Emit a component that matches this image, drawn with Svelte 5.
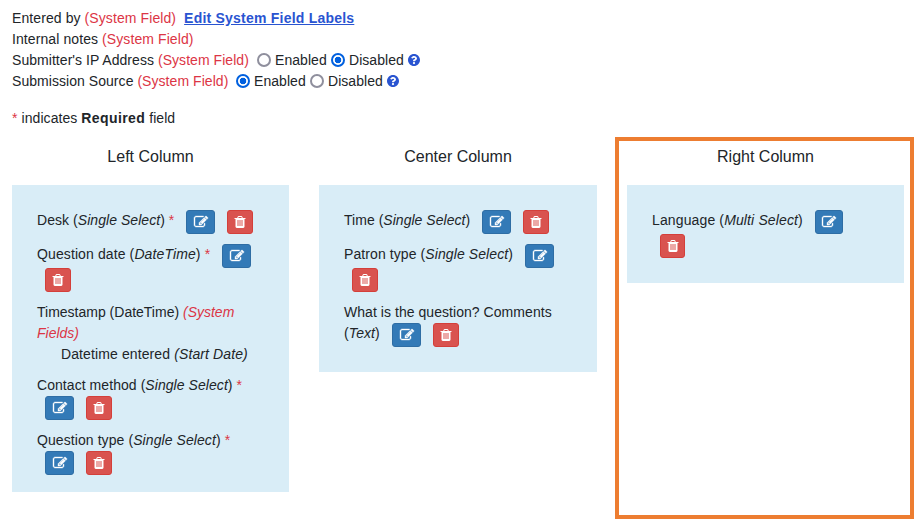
<script>
  const columns = [
    {
      title: 'Left Column',
      fields: [
        [{ name: 'Desk', type: 'Single Select', required: true, width: 141, track: 0.05, edit: true, remove: true }],
        [{ name: 'Question date', type: 'DateTime', required: true, width: 177, track: 0.11, edit: true }, { remove: true }],
        [{ system: 'Timestamp (DateTime)', note: '(System' }, { note: 'Fields)' }, { sub: 'Datetime entered', subtype: '(Start Date)', track: 0.11 }],
        [{ name: 'Contact method', type: 'Single Select', required: true, track: 0.06 }, { edit: true, remove: true }],
        [{ name: 'Question type', type: 'Single Select', required: true, track: 0.08 }, { edit: true, remove: true }]
      ]
    },
    {
      title: 'Center Column',
      fields: [
        [{ name: 'Time', type: 'Single Select', width: 130, track: 0.03, edit: true, remove: true }],
        [{ name: 'Patron type', type: 'Single Select', width: 173, track: 0.09, edit: true }, { remove: true }],
        [{ name: 'What is the question? Comments', track: 0.05 }, { type: 'Text', width: 40, track: 0.1, edit: true, remove: true }]
      ]
    },
    {
      title: 'Right Column',
      highlight: true,
      fields: [[{ name: 'Language', type: 'Multi Select', width: 155, track: 0.13, edit: true }, { remove: true }]]
    }
  ];
  const settings = [
    { label: "Submitter's IP Address", width: 245, value: 'Disabled' },
    { label: 'Submission Source', width: 224, value: 'Enabled' }
  ];
</script>

<main>
  <section class="system">
    <div class="row">Entered by&nbsp;<span class="red">(System Field)</span><a href="#labels">Edit System Field Labels</a></div>
    <div class="row">Internal notes&nbsp;<span class="red">(System Field)</span></div>
    {#each settings as s}
      <div class="row setting">
        <span style="width:{s.width}px">{s.label} <span class="red">(System Field)</span></span>
        {#each ['Enabled', 'Disabled'] as option}
          <span class="radio" class:checked={s.value === option}></span>
          <span class={option.toLowerCase()}>{option}</span>
        {/each}
        <svg class="help" viewBox="8 8 496 496"><path d="M504 256c0 136.997-111.043 248-248 248S8 392.997 8 256C8 119.083 119.043 8 256 8s248 111.083 248 248zM262.655 90c-54.497 0-89.255 22.957-116.549 63.758-3.536 5.286-2.353 12.415 2.715 16.258l34.699 26.31c5.205 3.947 12.621 3.008 16.665-2.122 17.864-22.658 30.113-35.797 57.303-35.797 20.429 0 45.698 13.148 45.698 32.958 0 14.976-12.363 22.667-32.534 33.976C247.128 238.528 216 254.941 216 296v4c0 6.627 5.373 12 12 12h56c6.627 0 12-5.373 12-12v-1.333c0-28.462 83.186-29.647 83.186-106.667 0-58.002-60.165-102-116.531-102zM256 338c-25.365 0-46 20.635-46 46 0 25.364 20.635 46 46 46s46-20.636 46-46c0-25.364-20.635-46-46-46z" /></svg>
      </div>
    {/each}
    <p><span class="red">*</span> indicates <b>Required</b> field</p>
  </section>

  <div class="columns">
    {#each columns as col}
      <section class="column" class:highlight={col.highlight}>
        <h2>{col.title}</h2>
        <div class="panel">
          {#each col.fields as lines}
            <div class="field">
              {#each lines as l}
                <div class="line" style="letter-spacing:{l.track ?? 0}px">
                  {#if l.name || l.type}
                    <span style={l.width ? `width:${l.width}px` : ''}>{l.name ?? ''}{#if l.type}{l.name ? ' ' : ''}(<i>{l.type}</i>){/if}{#if l.required}{' '}<span class="red">*</span>{/if}</span>
                  {/if}
                  {#if l.system}{l.system}&nbsp;{/if}
                  {#if l.note}<i class="red">{l.note}</i>{/if}
                  {#if l.sub}<span class="sub">{l.sub} <i>{l.subtype}</i></span>{/if}
                  {#if l.edit}
                    <button class="edit" aria-label="Edit"><svg viewBox="0 0 1792 1792"><path d="M888 1184l116-116-152-152-116 116v56h96v96h56zm440-720q-16-16-33 1l-350 350q-17 17-1 33t33-1l350-350q17-17 1-33zm80 594v190q0 119-84.5 203.5t-203.5 84.5h-832q-119 0-203.5-84.5t-84.5-203.5v-832q0-119 84.5-203.5t203.5-84.5h832q63 0 117 25 15 7 18 23 3 17-9 29l-49 49q-14 14-32 8-23-6-45-6h-832q-66 0-113 47t-47 113v832q0 66 47 113t113 47h832q66 0 113-47t47-113v-126q0-13 9-22l64-64q15-15 35-7t20 29zm-96-738l288 288-672 672h-288v-288zm444 132l-92 92-288-288 92-92q28-28 68-28t68 28l152 152q28 28 28 68t-28 68z" /></svg></button>
                  {/if}
                  {#if l.remove}
                    <button class="remove" aria-label="Delete"><svg viewBox="0 0 1792 1792"><path d="M704 1376v-704q0-14-9-23t-23-9h-64q-14 0-23 9t-9 23v704q0 14 9 23t23 9h64q14 0 23-9t9-23zm256 0v-704q0-14-9-23t-23-9h-64q-14 0-23 9t-9 23v704q0 14 9 23t23 9h64q14 0 23-9t9-23zm256 0v-704q0-14-9-23t-23-9h-64q-14 0-23 9t-9 23v704q0 14 9 23t23 9h64q14 0 23-9t9-23zm-544-992h448l-48-117q-7-9-17-11h-317q-10 2-17 11zm928 32v64q0 14-9 23t-23 9h-96v948q0 83-47 143.5t-113 60.5h-832q-66 0-113-58.5t-47-141.5v-952h-96q-14 0-23-9t-9-23v-64q0-14 9-23t23-9h309l70-167q15-37 54-63t79-26h320q40 0 79 26t54 63l70 167h309q14 0 23 9t9 23z" /></svg></button>
                  {/if}
                </div>
              {/each}
            </div>
          {/each}
        </div>
      </section>
    {/each}
  </div>
</main>

<style>
  :global(body) { background: #fff; }
  main {
    box-sizing: border-box;
    width: 920px;
    height: 528px;
    overflow: hidden;
    font: 14px/21px "Liberation Sans", Arial, sans-serif;
    color: #212529;
    display: flex;
    flex-direction: column;
  }
  .system { box-sizing: border-box; padding: 8px 12px 0; height: 137px; flex: none; }
  .row { display: flex; height: 21px; white-space: nowrap; letter-spacing: 0.09px; }
  .setting { letter-spacing: 0.05px; }
  .row span { flex: none; }
  .red { color: #dc3545; }
  a { color: #2954d1; font-weight: 700; margin-left: 8px; letter-spacing: 0.22px; }
  p { margin: 16px 0 0; letter-spacing: 0.07px; }
  b { letter-spacing: 0.4px; }
  .radio {
    box-sizing: border-box;
    width: 14px;
    height: 14px;
    margin: 3px 4px 0 0;
    border: 2px solid #8f8f9d;
    border-radius: 50%;
  }
  .checked {
    border-color: #0060df;
    background: radial-gradient(circle, #0060df 3px, #fff 3.6px);
  }
  .enabled { width: 56px; }
  .disabled { width: 59px; }
  .help { width: 12px; height: 12px; margin-top: 4px; fill: #2954d1; }
  .columns { display: flex; padding-left: 12px; }
  .column { width: 277px; height: 382px; box-sizing: border-box; flex: none; }
  .column:nth-child(2) { width: 278px; margin-left: 30px; }
  .highlight { width: 299px; margin-left: 18px; border: 4px solid #ed7d31; padding: 0 6px 0 8px; }
  h2 { margin: 0; padding: 9px 0 18px; font-size: 16px; font-weight: 400; line-height: 21px; text-align: center; }
  .highlight h2 { padding-top: 5px; }
  .panel { background: #d9edf7; padding: 25px; }
  .column:first-child .panel { padding-bottom: 17px; }
  .field + .field { margin-top: 10px; }
  .line { display: flex; align-items: flex-start; white-space: nowrap; }
  .line > span { flex: none; }
  .sub { padding-left: 24px; }
  button {
    box-sizing: border-box;
    width: 29px;
    height: 24px;
    margin: 0 4px 0 8px;
    padding: 0;
    border: 1px solid #2e6da4;
    border-radius: 3px;
    background: #337ab7;
    display: flex;
    align-items: center;
    justify-content: center;
    flex: none;
  }
  button svg { width: 14px; height: 14px; fill: #fff; overflow: visible; }
  .edit svg { stroke: #fff; stroke-width: 50px; }
  .remove { width: 26px; background: #d9534f; border-color: #d43f3a; }
  .highlight .edit { width: 28px; }
  .highlight .remove { width: 25px; }
</style>
